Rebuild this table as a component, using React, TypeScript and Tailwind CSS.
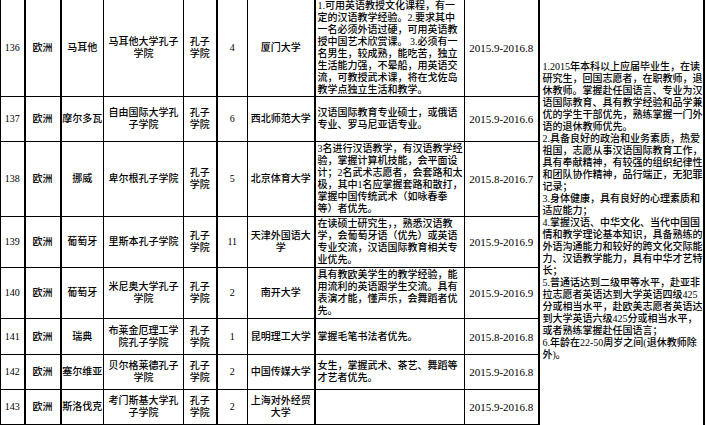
import React from "react";

type Row = {
  no: string;
  country: string;
  inst: string[];
  n: string;
  univ: string[];
  desc: string[];
  date: string;
  h: string;
};

const rows: Row[] = [
  {
    no: "136",
    country: "马耳他",
    inst: ["马耳他大学孔子", "学院"],
    n: "4",
    univ: ["厦门大学"],
    desc: [
      "1.可用英语教授文化课程，有一",
      "定的汉语教学经验。2.要求其中",
      "一名必须外语过硬，可用英语教",
      "授中国艺术欣赏课。 3.必须有一",
      "名男生，较成熟，能吃苦，独立",
      "生活能力强，不晕船，用英语交",
      "流，可教授武术课，将在戈佐岛",
      "教学点独立生活和教学。",
    ],
    date: "2015.9-2016.8",
    h: "h-[96px]",
  },
  {
    no: "137",
    country: "摩尔多瓦",
    inst: ["自由国际大学孔", "子学院"],
    n: "6",
    univ: ["西北师范大学"],
    desc: ["汉语国际教育专业硕士，或俄语", "专业、罗马尼亚语专业。"],
    date: "2015.9-2016.6",
    h: "h-[45px]",
  },
  {
    no: "138",
    country: "挪威",
    inst: ["卑尔根孔子学院"],
    n: "5",
    univ: ["北京体育大学"],
    desc: [
      "3名进行汉语教学，有汉语教学经",
      "验，掌握计算机技能，会平面设",
      "计；2名武术志愿者，会套路和太",
      "极，其中1名应掌握套路和散打，",
      "掌握中国传统武术（如咏春拳",
      "等）者优先。",
    ],
    date: "2015.8-2016.7",
    h: "h-[75px]",
  },
  {
    no: "139",
    country: "葡萄牙",
    inst: ["里斯本孔子学院"],
    n: "11",
    univ: ["天津外国语大", "学"],
    desc: [
      "在读硕士研究生，，熟悉汉语教",
      "学，会葡萄牙语（优先）或英语",
      "专业交流，汉语国际教育相关专",
      "业优先。",
    ],
    date: "2015.9-2016.9",
    h: "h-[51px]",
  },
  {
    no: "140",
    country: "葡萄牙",
    inst: ["米尼奥大学孔子", "学院"],
    n: "2",
    univ: ["南开大学"],
    desc: [
      "具有教欧美学生的教学经验，能",
      "用流利的英语跟学生交流。具有",
      "表演才能，懂声乐，会舞蹈者优",
      "先。",
    ],
    date: "2015.9-2016.9",
    h: "h-[51px]",
  },
  {
    no: "141",
    country: "瑞典",
    inst: ["布莱金厄理工学", "院孔子学院"],
    n: "1",
    univ: ["昆明理工大学"],
    desc: ["掌握毛笔书法者优先。"],
    date: "2015.8-2016.8",
    h: "h-[36px]",
  },
  {
    no: "142",
    country: "塞尔维亚",
    inst: ["贝尔格莱德孔子", "学院"],
    n: "2",
    univ: ["中国传媒大学"],
    desc: ["女生，掌握武术、茶艺、舞蹈等", "才艺者优先。"],
    date: "2015.9-2016.8",
    h: "h-[35px]",
  },
  {
    no: "143",
    country: "斯洛伐克",
    inst: ["考门斯基大学孔", "子学院"],
    n: "2",
    univ: ["上海对外经贸", "大学"],
    desc: [],
    date: "2015.9-2016.8",
    h: "h-[35px]",
  },
];

const reqs = [
  "1.2015年本科以上应届毕业生，在读",
  "研究生，回国志愿者，在职教师，退",
  "休教师。掌握赴任国语言、专业为汉",
  "语国际教育、具有教学经验和品学兼",
  "优的学生干部优先，熟练掌握一门外",
  "语的退休教师优先。",
  "2.具备良好的政治和业务素质，热爱",
  "祖国，志愿从事汉语国际教育工作，",
  "具有奉献精神，有较强的组织纪律性",
  "和团队协作精神，品行端正，无犯罪",
  "记录；",
  "3.身体健康，具有良好的心理素质和",
  "适应能力；",
  "4.掌握汉语、中华文化、当代中国国",
  "情和教学理论基本知识，具备熟练的",
  "外语沟通能力和较好的跨文化交际能",
  "力、汉语教学能力，具有中华才艺特",
  "长；",
  "5.普通话达到二级甲等水平，赴亚非",
  "拉志愿者英语达到大学英语四级425",
  "分或相当水平，赴欧美志愿者英语达",
  "到大学英语六级425分或相当水平，",
  "或者熟练掌握赴任国语言；",
  "6.年龄在22-50周岁之间(退休教师除",
  "外)。",
];

const Lines = ({ items }: { items: string[] }) => (
  <>
    {items.map((t, i) => (
      <div key={i} className="whitespace-nowrap">
        {t}
      </div>
    ))}
  </>
);

const cell = "border border-black p-0 align-middle";

export default function App() {
  return (
    <div className="h-[425px] w-[706px] overflow-hidden bg-white">
      <table className="w-[703px] table-fixed border-collapse font-['Liberation_Serif','Noto_Sans_CJK_SC',serif] text-[10px] leading-[12px] font-medium text-black">
        <colgroup>
          <col className="w-[24px]" />
          <col className="w-[36px]" />
          <col className="w-[43px]" />
          <col className="w-[80px]" />
          <col className="w-[33px]" />
          <col className="w-[31px]" />
          <col className="w-[67px]" />
          <col className="w-[150px]" />
          <col className="w-[74px]" />
          <col className="w-[165px]" />
        </colgroup>
        <tbody>
          {rows.map((r, i) => (
            <tr key={r.no} className={r.h}>
              <td className={`${cell} border-r-2 border-t-0 text-center`}>{r.no}</td>
              <td className={`${cell} border-r-2 border-t-0 text-center`}>欧洲</td>
              <td className={`${cell} border-t-0 text-center whitespace-nowrap`}>{r.country}</td>
              <td className={`${cell} border-t-0 text-center`}>
                <Lines items={r.inst} />
              </td>
              <td className={`${cell} border-r-2 border-t-0 text-center`}>
                <div>孔子</div>
                <div>学院</div>
              </td>
              <td className={`${cell} border-t-0 text-center`}>{r.n}</td>
              <td className={`${cell} border-r-2 border-t-0 text-center`}>
                <Lines items={r.univ} />
              </td>
              <td className={`${cell} border-t-0 pl-[2px] text-left`}>
                <Lines items={r.desc} />
              </td>
              <td className={`${cell} border-r-2 border-t-0 text-center text-[11px] whitespace-nowrap`}>
                {r.date}
              </td>
              {i === 0 && (
                <td
                  rowSpan={rows.length + 1}
                  className="border-2 border-t-0 border-b-0 border-black p-0 pl-[3px] pt-[61px] align-top text-left"
                >
                  <Lines items={reqs} />
                </td>
              )}
            </tr>
          ))}
          <tr className="h-[20px]">
            <td className={`${cell} border-r-2`} />
            <td className={`${cell} border-r-2`} />
            <td className={cell} />
            <td className={cell} />
            <td className={`${cell} border-r-2`} />
            <td className={cell} />
            <td className={`${cell} border-r-2`} />
            <td className={cell} />
            <td className={`${cell} border-r-2`} />
          </tr>
        </tbody>
      </table>
    </div>
  );
}
